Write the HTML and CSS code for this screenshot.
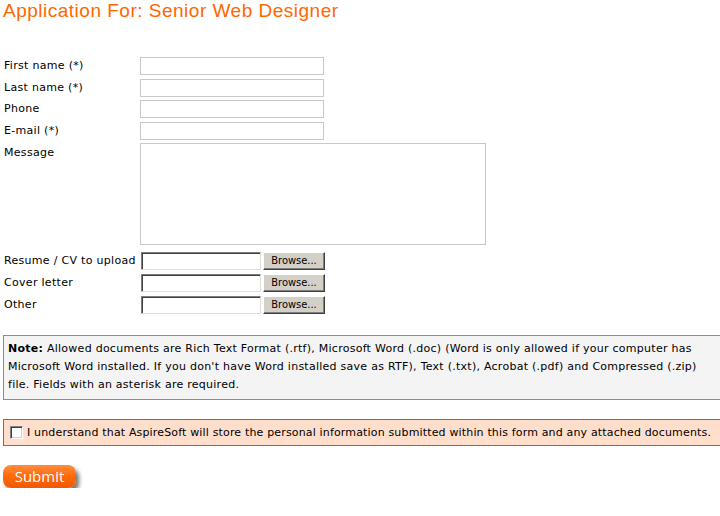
FILE: index.html
```html
<!DOCTYPE html>
<html>
<head>
<meta charset="utf-8">
<title>Application For: Senior Web Designer</title>
<link rel="stylesheet" href="styles.css">
</head>
<body>
<h1 class="title">Application For: Senior Web Designer</h1>
<form class="form">
  <div class="row"><label class="lbl">First name (*)</label><input class="txt" type="text"></div>
  <div class="row"><label class="lbl">Last name (*)</label><input class="txt" type="text"></div>
  <div class="row"><label class="lbl">Phone</label><input class="txt" type="text"></div>
  <div class="row"><label class="lbl">E-mail (*)</label><input class="txt" type="text"></div>
  <div class="row row-area"><label class="lbl lbl-top">Message</label><textarea class="area"></textarea></div>
  <div class="row row-file"><label class="lbl">Resume / CV to upload</label><span class="file"><input class="filetxt" type="text"><button class="browse" type="button">Browse...</button></span></div>
  <div class="row row-file"><label class="lbl">Cover letter</label><span class="file"><input class="filetxt" type="text"><button class="browse" type="button">Browse...</button></span></div>
  <div class="row row-file"><label class="lbl">Other</label><span class="file"><input class="filetxt" type="text"><button class="browse" type="button">Browse...</button></span></div>

  <div class="note"><b>Note:</b> Allowed documents are Rich Text Format (.rtf), Microsoft Word (.doc) (Word is only allowed if your computer has<br>Microsoft Word installed. If you don't have Word installed save as RTF), Text (.txt), Acrobat (.pdf) and Compressed (.zip)<br>file. Fields with an asterisk are required.</div>

  <div class="consent"><input class="check" type="checkbox"><span class="consent-text">I understand that AspireSoft will store the personal information submitted within this form and any attached documents.</span></div>

  <button class="submit" type="button">Submit</button>
</form>
</body>
</html>
```
FILE: styles.css
```css
html, body {
  overflow: hidden;
}
body {
  margin: 0;
  padding: 0 3px;
  background: #ffffff;
  color: #000000;
  font-family: "DejaVu Sans", sans-serif;
  font-size: 11px;
  letter-spacing: 0.3px;
}
.title {
  margin: 0 0 36px 0;
  font-family: "Liberation Sans", Arial, sans-serif;
  font-weight: normal;
  font-size: 19px;
  line-height: 21px;
  letter-spacing: 0.5px;
  color: #ff6600;
  white-space: nowrap;
}
.form {
  margin: 0;
}
.row {
  display: flex;
  align-items: center;
  height: 18px;
  margin-bottom: 3.5px;
}
.lbl {
  width: 136px;
  padding-left: 1px;
  flex: none;
  white-space: nowrap;
  line-height: 14px;
}
.lbl-top {
  align-self: flex-start;
  padding-top: 3px;
}
.txt {
  box-sizing: border-box;
  width: 184px;
  height: 18px;
  margin: 0;
  padding: 0 2px;
  border: 1px solid #c8c8c8;
  background: #ffffff;
  outline: none;
}
.row-area {
  height: 102px;
  align-items: flex-start;
  margin-bottom: 7px;
}
.area {
  box-sizing: border-box;
  width: 346px;
  height: 102px;
  margin: 0;
  padding: 2px;
  border: 1px solid #c8c8c8;
  resize: none;
  outline: none;
}
.row-file {
  margin-bottom: 4px;
}
.file {
  display: flex;
  margin-left: 1px;
  gap: 2px;
}
.filetxt {
  box-sizing: border-box;
  width: 120px;
  height: 18px;
  margin: 0;
  padding: 0 2px;
  border-style: solid;
  border-width: 1px;
  border-color: #7f7f7f #e4e0d8 #e4e0d8 #7f7f7f;
  box-shadow: inset 1px 1px 0 #404040;
  background: #ffffff;
  outline: none;
}
.browse {
  box-sizing: border-box;
  width: 62px;
  height: 18px;
  margin: 0;
  padding: 0 0 1px 0;
  border-style: solid;
  border-width: 1px;
  border-color: #ffffff #404040 #404040 #ffffff;
  box-shadow: inset -1px -1px 0 #808080;
  background: #d4d0c8;
  color: #000000;
  font-family: "DejaVu Sans Condensed", "DejaVu Sans", sans-serif;
  font-size: 11px;
  letter-spacing: 0;
  line-height: 14px;
}
.note {
  margin-top: 21px;
  width: 740px;
  box-sizing: border-box;
  padding: 4px 0 5px 4px;
  border: 1px solid #8c8c8c;
  background: #f4f4f4;
  line-height: 18px;
  letter-spacing: 0.26px;
  white-space: nowrap;
}
.consent {
  margin-top: 19px;
  width: 740px;
  box-sizing: border-box;
  display: flex;
  align-items: center;
  padding: 6px 6px;
  border: 1px solid #c4581a;
  background: #ffdfcc;
  white-space: nowrap;
}
.check {
  -webkit-appearance: none;
  appearance: none;
  box-sizing: border-box;
  width: 13px;
  height: 13px;
  margin: 0 4px 0 0;
  border-style: solid;
  border-width: 1px;
  border-color: #808080 #ffffff #ffffff #808080;
  box-shadow: inset 1px 1px 0 #404040, inset -1px -1px 0 #d4d0c8;
  background: #ffffff;
  flex: none;
}
.consent-text {
  font-family: "DejaVu Sans", sans-serif;
  font-size: 11px;
  letter-spacing: 0.16px;
  line-height: 13px;
}
.submit {
  display: block;
  margin-top: 19px;
  width: 73px;
  height: 23px;
  padding: 0 0 1px 0;
  border: none;
  border-radius: 8px;
  background: linear-gradient(#ff8c40 0%, #ff6a0a 50%, #f25800 100%);
  box-shadow: 3px 4px 4px rgba(0, 0, 0, 0.55);
  color: #ffffff;
  font-family: "Open Sans", "DejaVu Sans", sans-serif;
  font-size: 15px;
  letter-spacing: 0;
  line-height: 20px;
  text-align: center;
}
```
